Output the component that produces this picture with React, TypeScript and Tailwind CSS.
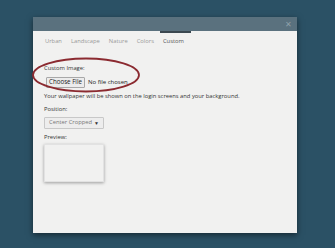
import React from 'react'

const tabs = ['Urban', 'Landscape', 'Nature', 'Colors', 'Custom']

const App: React.FC = () => {
	return (
		<div
			className="w-[335px] h-[248px] bg-[#2b5165] pt-[17px] pl-[33px] overflow-hidden"
			style={{ fontFamily: '"Open Sans", sans-serif' }}
		>
			<div className="w-[264px] h-[216px] bg-[#f1f1f0] shadow-[0_2px_6px_rgba(0,0,0,0.5)] flex flex-col relative">
				<div className="h-[14px] bg-[#5a717e] flex justify-end items-center pr-[5px] relative">
					<span className="text-[8px] leading-none text-[#8ea0a9]">✕</span>
					<div className="absolute left-[127px] bottom-[-2px] w-[31px] h-[2px] bg-[#3b4850]" />
				</div>
				<div className="flex gap-[9px] pl-[12px] pt-[8px] text-[5.8px] leading-none text-[#999]">
					{tabs.map((t) => (
						<span key={t} className={t === 'Custom' ? 'text-[#555]' : ''}>
							{t}
						</span>
					))}
				</div>
				<div className="flex flex-col pl-[11px] pt-[21px] text-[5.8px] leading-none text-[#333]">
					<span>Custom Image:</span>
					<div className="flex items-center gap-[3px] mt-[5px] pl-[2px]">
						<span className="border border-[#a8a8a8] bg-[#ececec] rounded-[1px] px-[2px] h-[11px] flex items-center text-[6.2px] text-[#222]">
							Choose File
						</span>
						<span className="text-[6px] text-[#222]">No file chosen</span>
					</div>
					<span className="mt-[6px] whitespace-nowrap">Your wallpaper will be shown on the login screens and your background.</span>
					<span className="mt-[8px]">Position:</span>
					<div className="mt-[4px] w-[60px] h-[12px] border border-[#c8c8c8] rounded-[1px] bg-[#ededed] flex items-center justify-between px-[4px] text-[#777]">
						<span className="whitespace-nowrap">Center Cropped</span>
						<span className="text-[5px] text-[#333]">▼</span>
					</div>
					<span className="mt-[6px]">Preview:</span>
					<div className="mt-[3px] w-[60px] h-[38px] bg-[#f1f1f0] border border-[#e2e2e2] shadow-[0_1px_3px_rgba(0,0,0,0.35)]" />
				</div>
				<svg className="absolute left-[-2px] top-[39px]" width="110" height="38" viewBox="0 0 110 38">
					<ellipse cx="55" cy="19" rx="53" ry="16.5" fill="none" stroke="#8b2a30" strokeWidth="1.8" />
				</svg>
			</div>
		</div>
	)
}

export default App
